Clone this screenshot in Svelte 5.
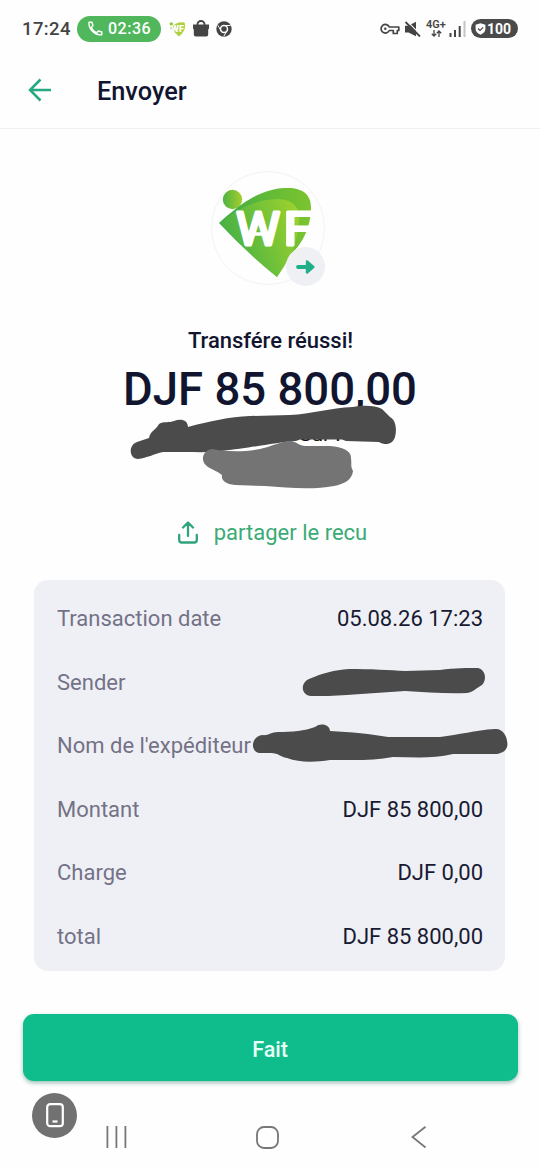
<script lang="ts">
  type Row = { label: string; value: string };

  const rows: Row[] = [
    { label: 'Transaction date', value: '05.08.26 17:23' },
    { label: 'Sender', value: '' },
    { label: "Nom de l'expéditeur", value: '' },
    { label: 'Montant', value: 'DJF 85 800,00' },
    { label: 'Charge', value: 'DJF 0,00' },
    { label: 'total', value: 'DJF 85 800,00' },
  ];
  const bars = [0, 9, 18];
</script>

<div class="screen">
  <div class="status">
    <span class="time">17:24</span>
    <span class="call">
      <svg width="15" height="15" viewBox="0 0 15 15" fill="none" stroke="#fff" stroke-width="1.4" stroke-linejoin="round">
        <path d="M1 1.2h3l1 3.6-1.8 1.6c1 2.3 3 4.4 5.4 5.4l1.7-1.8 3.5 1v2.8C7 14.8.6 8.5 1 1.2z" />
      </svg>
      02:36
    </span>
    <svg class="mini-wf" width="17" height="16" viewBox="0 0 17 16">
      <circle cx="2.3" cy="3" r="1.7" fill="#8fc83c" />
      <path d="M1 7Q8 0 15.5 1.5Q18 9 10 15.5z" fill="#b0d040" />
      <text x="2" y="10.5" font-size="8.5" textLength="13" lengthAdjust="spacingAndGlyphs">WF</text>
    </svg>
    <svg class="bag" width="16" height="17" viewBox="0 0 16 17">
      <path d="M4.5 6V4a3.5 3 0 0 1 7 0v2" fill="none" stroke="#444" stroke-width="1.8" />
      <path d="M0 4.5h16v4l-.8 1v5q0 2-2 2H2.800q-2 0-2-2v-5l-.8-1z" fill="#444" />
    </svg>
    <svg class="chrome" width="16" height="16" viewBox="0 0 16 16">
      <circle cx="8" cy="8" r="7.7" fill="#444" />
      <circle cx="8" cy="8" r="3.5" fill="#444" stroke="#fff" stroke-width="1.5" />
      <path d="M8 4.5h6.5M5 9.7L1.9 4.3M11 9.7l-3.2 5.6" stroke="#fff" stroke-width="1" />
    </svg>
    <div class="right">
      <svg width="20" height="12" viewBox="0 0 20 12" fill="none" stroke="#444" stroke-width="1.7">
        <path d="M9.3 4h9.5v3.5h-1.500V10.5h-4V7.5h-4A4.3 4.3 0 1 1 9.3 4z" stroke-linejoin="round" />
        <circle cx="5.3" cy="5.8" r="1.2" fill="#444" stroke="none" />
      </svg>
      <svg class="mute" width="17" height="16" viewBox="0 0 17 16">
        <path d="M1 4.8h3.500L12 .8v14.400L4.500 11.5H1z" fill="#444" />
        <path d="M3 .2l14 14" stroke="#fff" stroke-width="1.2" />
        <path d="M1.5 1l14.500 14.500" stroke="#444" stroke-width="1.8" />
      </svg>
      <span class="net">
        4G+
        <svg width="11" height="7" viewBox="0 0 11 7" fill="none" stroke="#444" stroke-width="1.3">
          <path d="M3 0v6M.8 3.8L3 6l2.2-2.2M8 7V1M5.8 3.2L8 1l2.2 2.2" />
        </svg>
      </span>
      <svg class="signal" width="17" height="17" viewBox="0 0 17 17" stroke="#444" stroke-width="2">
        <path d="M1.5 17v-4M6 17v-7M10.7 17V6" />
        <path d="M15.5 17V1" stroke="#c4c4c4" />
      </svg>
      <span class="battery">
        <svg width="11" height="12" viewBox="0 0 11 12">
          <path d="M5.5.3l4.9 1.5v4.2q0 3.5-4.9 5.7Q.6 9.5.6 6V1.8z" fill="#fff" />
          <path d="M3 5.5l2 2 3.2-3.2" fill="none" stroke="#4a4a4a" stroke-width="1.2" />
        </svg>
        100
      </span>
    </div>
  </div>

  <header>
    <svg width="24" height="24" viewBox="0 0 24 24" fill="none" stroke="#25a983" stroke-width="2.5">
      <path d="M23 12H2M12.5 1.5L2 12l10.5 10.5" />
    </svg>
    <h1>Envoyer</h1>
  </header>

  <main>
    <div class="logo">
      <svg width="112" height="112" viewBox="0 0 112 112">
        <defs>
          <linearGradient id="outer" x1="0" x2="1">
            <stop offset="0" stop-color="#3bab46" />
            <stop offset=".55" stop-color="#62bb37" />
            <stop offset="1" stop-color="#7cc42f" />
          </linearGradient>
          <linearGradient id="inner" x1="0" x2="1" y1=".6" y2=".2">
            <stop offset="0" stop-color="#3fae48" />
            <stop offset="1" stop-color="#a6d52c" />
          </linearGradient>
          <linearGradient id="dot">
            <stop offset="0" stop-color="#4db244" />
            <stop offset="1" stop-color="#a5cf2b" />
          </linearGradient>
        </defs>
        <circle cx="20.5" cy="27.5" r="9.7" fill="url(#dot)" />
        <path d="M7 51C25 35 46 17 73 16C91 15 99 23 99 35C99 58 88 75 77 84Q72 94 65 105Q34 80 7 51z" fill="url(#outer)" />
        <path d="M8 51C27 36 43 28 65 27C79 27 89 34 87 51C85 75 74 93 65 105Q34 80 8 51z" fill="url(#inner)" opacity=".8" />
        <g class="wf">
          <text x="24" y="73" textLength="44" lengthAdjust="spacingAndGlyphs">W</text>
          <text x="71.5" y="73" textLength="29" lengthAdjust="spacingAndGlyphs">F</text>
        </g>
        <path d="M41 62h10" stroke="#fff" stroke-width="3.5" />
      </svg>
      <span class="badge">
        <svg width="19" height="14" viewBox="0 0 19 14" fill="#20ad89" stroke="#20ad89" stroke-linejoin="round" stroke-linecap="round">
          <path d="M2 7h11" stroke-width="3.8" />
          <path d="M11 1.5L17.3 7 11 12.5z" stroke-width="2.4" />
        </svg>
      </span>
    </div>

    <h2>Transfére réussi!</h2>
    <p class="amount">DJF 85 800,00</p>

    <div class="share">
      <svg width="20" height="23" viewBox="0 0 20 23" fill="none" stroke="#30a47a" stroke-width="2.3" stroke-linecap="round" stroke-linejoin="round">
        <path d="M10 15V2M5 6.5l5-5 5 5M1.200 14v5q0 2.500 2.500 2.500h12.600q2.500 0 2.500-2.500v-5" />
      </svg>
      <span>partager le recu</span>
    </div>

    <section class="card">
      {#each rows as row}
        <div class="row">
          <span class="label">{row.label}</span>
          <span class="value">{row.value}</span>
        </div>
      {/each}
    </section>

    <button>Fait</button>
  </main>

  <nav>
    <svg class="recents" width="22" height="22" viewBox="0 0 22 22" stroke="#777" stroke-width="1.8">
      {#each bars as x}
        <path d="M{x + 2.4} 0v22" />
      {/each}
    </svg>
    <svg class="home" width="23" height="23" viewBox="0 0 23 23" fill="none" stroke="#777" stroke-width="1.8">
      <rect x="1" y="1" width="21" height="21" rx="7" />
    </svg>
    <svg class="back" width="16" height="22" viewBox="0 0 16 22" fill="none" stroke="#777" stroke-width="1.8">
      <path d="M14.5 .8L1.5 11l13 10.5" />
    </svg>
  </nav>

  <span class="float">
    <svg width="18" height="25" viewBox="0 0 18 25" fill="none" stroke="#fff" stroke-width="2.2">
      <rect x="1.2" y="1.2" width="15.6" height="22" rx="3" />
      <path d="M6.5 18.500h5" />
    </svg>
  </span>

  <!-- marker strokes hiding the private fields -->
  <svg class="marks" width="540" height="1170" viewBox="0 0 540 1170">
    <text x="299" y="441" font-size="21" fill="#111">Sur .</text>
    <path
      fill="#4b4b4b"
      d="M138 459C129 459 128 445 137 442L149 438C150 431 156 430 159 424C164 421 169 423 174 421C181 418 188 420 188 427C210 421 229 417 250 416L290 415C311 414 330 408 353 407C362 405 375 405 382 409L390 417C396 420 397 430 395 437C393 444 386 446 379 442L346 441L342 439.500L300 439.500L296 441C277 442 245 449 229 450C211 453 199 452 184 452L163 452C154 454 147 458 138 459z"
    />
    <path
      fill="#747474"
      d="M208 467C199 461 203 450 212 449C227 452 244 452 260 449C270 447 282 441 291 441C297 442 300 446 305 446L330 446C343 447 352 451 351 459C352 464 350 465 353 471C352 480 344 484 334 486C314 490 289 488 265 486L235 485C225 484 221 480 222 475C217 471 213 470 208 467z"
    />
    <path
      fill="#4b4b4b"
      d="M311 696C301 695 300 683 309 679C323 673 334 670 349 669C370 669 390 670 405 671L440 670C455 668 468 668 478 668C486 670 487 680 482 685C476 688 474 692 467 693C447 694 425 692 405 691C386 692 365 694 347 695C334 696 322 696 311 696z"
    />
    <path
      fill="#4b4b4b"
      d="M259 753C250 751 251 737 262 735C268 736 271 732 278 732C292 732 305 731 315 727C321 722 330 725 330 731C351 732 371 734 388 737L440 737C459 735 475 730 495 729C502 728 507 736 507 741C509 749 504 753 497 754L453 754C432 759 413 757 393 757C374 761 353 760 330 760C316 762 300 763 287 758C280 757 279 753 271 753z"
    />
  </svg>
</div>

<style>
  :global(body) {
    margin: 0;
    background: #fefefe;
  }
  .screen {
    position: relative;
    width: 540px;
    height: 1170px;
    overflow: hidden;
    display: flex;
    flex-direction: column;
    background: #fefefe;
    font-family: Roboto, sans-serif;
    color: #11152f;
  }
  svg {
    display: block;
    flex: none;
  }
  .status {
    display: flex;
    align-items: center;
    height: 56px;
    box-sizing: border-box;
    padding: 1px 22px 0;
    color: #444;
  }
  .time {
    width: 55px;
    font-size: 18.5px;
    font-weight: 500;
    letter-spacing: 0.4px;
  }
  .call {
    display: flex;
    align-items: center;
    gap: 5px;
    width: 84px;
    height: 26px;
    box-sizing: border-box;
    padding-left: 11px;
    border-radius: 13px;
    background: #50b75c;
    color: #fff;
    font-size: 16px;
    font-weight: 500;
    letter-spacing: 0.5px;
  }
  .mini-wf {
    margin-left: 8px;
  }
  .mini-wf text {
    font-family: Roboto, sans-serif;
    font-weight: 900;
    fill: #fff;
  }
  .bag {
    margin-left: 7px;
  }
  .chrome {
    margin-left: 7px;
  }
  .right {
    display: flex;
    align-items: center;
    margin-left: auto;
  }
  .mute {
    margin-left: 4px;
  }
  .net {
    display: flex;
    flex-direction: column;
    align-items: center;
    width: 22px;
    margin-left: 4px;
    font-size: 11px;
    line-height: 10px;
    font-weight: 600;
  }
  .signal {
    margin-left: 2px;
  }
  .battery {
    display: flex;
    align-items: center;
    gap: 1px;
    width: 47px;
    height: 19px;
    box-sizing: border-box;
    margin-left: 5px;
    padding-left: 4px;
    border-radius: 10px;
    background: #4a4a4a;
    color: #fff;
    font-size: 14px;
    font-weight: 700;
  }
  header {
    display: flex;
    align-items: center;
    height: 73px;
    box-sizing: border-box;
    padding: 0 0 4px 28px;
    border-bottom: 1px solid #f0f0f2;
  }
  h1 {
    margin: 2px 0 0 45px;
    font-size: 25.3px;
    font-weight: 500;
  }
  main {
    display: flex;
    flex-direction: column;
    align-items: center;
  }
  .logo {
    position: relative;
    width: 112px;
    height: 112px;
    margin: 42px 4px 0 0;
    border: 1px solid #f3f3f5;
    border-radius: 50%;
  }
  .wf {
    font-family: Roboto, sans-serif;
    font-size: 46px;
    font-weight: 400;
    fill: #fff;
    stroke: #fff;
    stroke-width: 3;
    stroke-linejoin: round;
  }
  .badge {
    position: absolute;
    right: -1px;
    bottom: -2px;
    display: flex;
    align-items: center;
    justify-content: center;
    width: 39px;
    height: 39px;
    border-radius: 50%;
    background: #eff0f4;
  }
  h2 {
    margin: 42px 0 0 1px;
    font-size: 22px;
    line-height: 28px;
    font-weight: 500;
  }
  .amount {
    margin: 7px 0 0;
    font-size: 45.5px;
    line-height: 56px;
    font-weight: 500;
  }
  .share {
    display: flex;
    align-items: center;
    gap: 16px;
    height: 30px;
    margin-top: 99px;
    margin-left: 5px;
    color: #3bab76;
    font-size: 22px;
  }
  .card {
    display: flex;
    flex-direction: column;
    width: 471px;
    height: 391px;
    box-sizing: border-box;
    margin: 33px 1px 0 0;
    padding: 7px 22px 3px 23px;
    border-radius: 14px;
    background: #eff0f5;
  }
  .row {
    display: flex;
    flex: 1;
    align-items: center;
    justify-content: space-between;
    font-size: 22px;
  }
  .label {
    color: #747287;
  }
  .value {
    color: #181a32;
  }
  button {
    width: 495px;
    height: 67px;
    margin: 43px 0 0;
    padding: 3px 0 0;
    border: 0;
    border-radius: 11px;
    background: #0fbd8c;
    box-shadow: 0 2px 4px rgba(10, 100, 75, 0.4);
    color: #e8fff7;
    font-family: inherit;
    font-size: 21.5px;
    font-weight: 500;
  }
  nav {
    display: flex;
    align-items: center;
    height: 24px;
    margin-top: 44px;
    padding-left: 105px;
  }
  .home {
    margin-left: 129px;
  }
  .back {
    margin-left: 132px;
  }
  .float {
    position: absolute;
    left: 32px;
    top: 1093px;
    display: flex;
    align-items: center;
    justify-content: center;
    width: 45px;
    height: 45px;
    border-radius: 50%;
    background: #717171;
  }
  .marks {
    position: absolute;
    left: 0;
    top: 0;
    pointer-events: none;
  }
</style>
